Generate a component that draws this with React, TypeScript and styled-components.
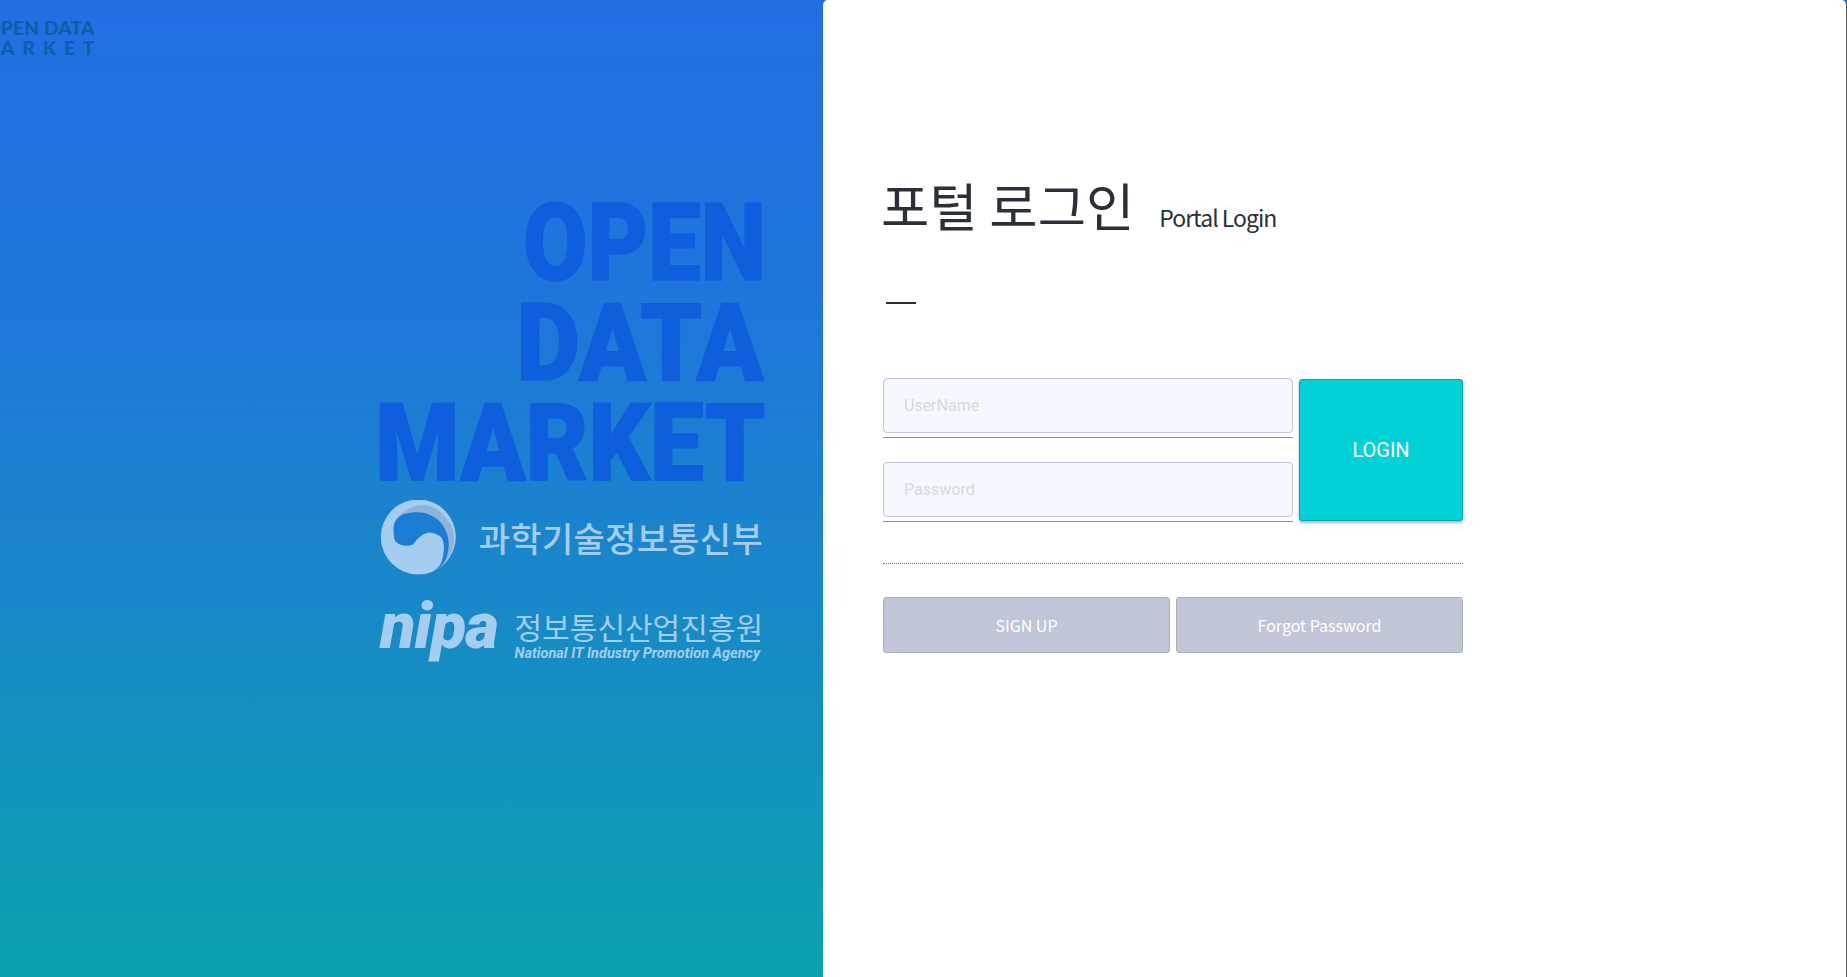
import React from 'react';
import styled, { createGlobalStyle } from 'styled-components';

const KR = `'Noto Sans CJK KR', 'Noto Sans', sans-serif`;

const GlobalStyle = createGlobalStyle`
  html, body {
    margin: 0;
    padding: 0;
    height: 100%;
    overflow: hidden;
    font-family: ${KR};
  }
  * {
    box-sizing: border-box;
  }
`;

const Page = styled.div`
  display: flex;
  width: 1847px;
  height: 977px;
  background: linear-gradient(180deg, #226fe3 0%, #1f75db 30%, #1a84cc 55%, #0aa2ae 100%);
  overflow: hidden;
`;

const Brand = styled.section`
  display: flex;
  flex-direction: column;
  align-items: flex-end;
  width: 823px;
  padding-right: 60px;
  overflow: hidden;
`;

const TopLogo = styled.a`
  align-self: flex-start;
  margin: 18px 0 0 -15px;
  height: 131px;
  font-family: 'Lato', sans-serif;
  font-weight: 900;
  font-size: 19px;
  line-height: 19.5px;
  color: #0d5fa9;
  white-space: nowrap;
`;

const LogoLine = styled.span<{ $wide?: boolean }>`
  display: block;
  margin-left: ${({ $wide }) => ($wide ? '-10px' : '0')};
  letter-spacing: ${({ $wide }) => ($wide ? '8px' : '0.3px')};
`;

const BigTitle = styled.div`
  display: flex;
  flex-direction: column;
  align-items: flex-end;
  margin-top: 44px;
  height: 294px;
`;

const BigLine = styled.span<{ $scale: number; $shift: number }>`
  display: block;
  height: 100px;
  font-family: 'Roboto', sans-serif;
  font-weight: 900;
  font-size: 108px;
  line-height: 100px;
  color: #0f5fdc;
  -webkit-text-stroke: 1.5px #0f5fdc;
  white-space: nowrap;
  transform: translateX(${({ $shift }) => $shift}px) scaleX(${({ $scale }) => $scale});
  transform-origin: right center;
`;

const Ministry = styled.div`
  display: flex;
  align-items: center;
  justify-content: space-between;
  width: 383px;
  margin-top: 13px;
`;

const MinistryName = styled.span`
  font-size: 34px;
  font-weight: 500;
  line-height: 40px;
  letter-spacing: 0.3px;
  color: #a5cdf0;
  white-space: nowrap;
`;

const Nipa = styled.div`
  display: flex;
  align-items: center;
  justify-content: space-between;
  width: 383px;
  margin-top: 18px;
`;

const NipaMark = styled.span`
  font-family: 'Roboto', sans-serif;
  font-weight: 900;
  font-style: italic;
  font-size: 65px;
  line-height: 70px;
  letter-spacing: -1px;
  color: #a5cdf0;
  transform: translateY(-2px);
`;

const NipaText = styled.div`
  display: flex;
  flex-direction: column;
  padding-top: 17px;
  color: #a5cdf0;
`;

const NipaKorean = styled.span`
  font-size: 30px;
  line-height: 32px;
  white-space: nowrap;
`;

const NipaEnglish = styled.span`
  margin-top: 3px;
  font-family: 'Roboto', sans-serif;
  font-weight: 700;
  font-style: italic;
  font-size: 14.5px;
  line-height: 18px;
  white-space: nowrap;
`;

const Panel = styled.main`
  flex: 1;
  padding: 166px 0 0 60px;
  background: #fff;
  border-radius: 5px 5px 0 0;
  border-right: 1px solid #555;
`;

const Heading = styled.div`
  display: flex;
  align-items: baseline;
  gap: 25px;
  margin-left: -2px;
`;

const HeadingKo = styled.h1`
  margin: 0;
  font-size: 52.5px;
  font-weight: 400;
  line-height: 76px;
  color: #2a2f38;
`;

const HeadingEn = styled.span`
  font-size: 23px;
  font-weight: 400;
  letter-spacing: -1px;
  color: #2a2f38;
`;

const Dash = styled.div`
  width: 30px;
  height: 2px;
  margin: 60px 0 74px 3px;
  background: #2a2f38;
`;

const LoginForm = styled.form`
  display: flex;
  flex-direction: column;
  width: 580px;
`;

const LoginRow = styled.div`
  display: grid;
  grid-template-columns: 410px 164px;
  column-gap: 6px;
`;

const Fields = styled.div`
  display: flex;
  flex-direction: column;
  gap: 24px;
`;

const Field = styled.div`
  padding-bottom: 4px;
  border-bottom: 1px solid #8c8c8c;
`;

const Input = styled.input`
  display: block;
  width: 100%;
  height: 55px;
  padding: 0 20px;
  background: #f5f8fe;
  border: 1px solid #c0c6d8;
  border-radius: 4px;
  font-family: 'Roboto', sans-serif;
  font-size: 16px;
  outline: none;

  &::placeholder {
    color: #d3d8e4;
    opacity: 1;
  }
`;

const LoginButton = styled.button`
  margin-top: 1px;
  height: 142px;
  background: #00d2d8;
  border: 1px solid #00a9b0;
  border-radius: 3px;
  box-shadow: 0 2px 3px rgba(0, 0, 0, 0.3);
  font-family: 'Roboto', sans-serif;
  font-size: 20px;
  font-weight: 400;
  color: #fff;
`;

const DottedRule = styled.hr`
  width: 100%;
  margin: 41px 0 33px;
  border: 0;
  border-top: 1px dotted #777;
`;

const SubButtons = styled.div`
  display: grid;
  grid-template-columns: 1fr 1fr;
  column-gap: 6px;
`;

const SubButton = styled.button`
  height: 56px;
  padding-bottom: 2px;
  background: #c0c6d5;
  border: 1px solid #a9aebf;
  border-radius: 3px;
  font-family: ${KR};
  font-size: 16px;
  color: #fff;
`;

const BODY_EDGE =
  'C57 69 60 66 61.7 61.7C63 57 64 52 64 46.7C64 40 61 36 58 35C54 32.5 50 32 48 32.7C44 33 41 36 38 38.3C35 42 33 45 31.7 45C28 46 25 46 21.7 45C17 44 14 40 14 36.7Z';

const TaegeukMark = () => (
  <svg width="77" height="75" viewBox="0 0 77 75">
    <circle cx="38.3" cy="37" r="37.5" fill="#a5cdf0" />
    <path
      d={`M13.5 30C14 24 15 20 17 18C22 11 33 5 43.3 5C50 5 56 8 60 11.7C65 16 69 21 71.7 26.7C78 42 72 62 52 72${BODY_EDGE}`}
      fill="#8fb3d6"
    />
    <path
      d={`M13.5 30C13 20 20 13 33 12.5C41 11.5 47 13 52 16C60 20 63 25 65.5 30C68 35 69 41 68.7 46.7C68 53 67 58 64.5 62C62 66 58 69 52 72${BODY_EDGE}`}
      fill="#1c7dd4"
    />
  </svg>
);

const App: React.FC = () => {
  return (
    <Page>
      <GlobalStyle />
      <Brand>
        <TopLogo>
          <LogoLine>OPEN DATA</LogoLine>
          <LogoLine $wide>MARKET</LogoLine>
        </TopLogo>
        <BigTitle>
          <BigLine $scale={0.865} $shift={3}>OPEN</BigLine>
          <BigLine $scale={0.91} $shift={0}>DATA</BigLine>
          <BigLine $scale={0.89} $shift={2}>MARKET</BigLine>
        </BigTitle>
        <Ministry>
          <TaegeukMark />
          <MinistryName>과학기술정보통신부</MinistryName>
        </Ministry>
        <Nipa>
          <NipaMark>nipa</NipaMark>
          <NipaText>
            <NipaKorean>정보통신산업진흥원</NipaKorean>
            <NipaEnglish>National IT Industry Promotion Agency</NipaEnglish>
          </NipaText>
        </Nipa>
      </Brand>
      <Panel>
        <Heading>
          <HeadingKo>포털 로그인</HeadingKo>
          <HeadingEn>Portal Login</HeadingEn>
        </Heading>
        <Dash />
        <LoginForm>
          <LoginRow>
            <Fields>
              <Field>
                <Input placeholder="UserName" />
              </Field>
              <Field>
                <Input type="password" placeholder="Password" />
              </Field>
            </Fields>
            <LoginButton type="button">LOGIN</LoginButton>
          </LoginRow>
          <DottedRule />
          <SubButtons>
            <SubButton type="button">SIGN UP</SubButton>
            <SubButton type="button">Forgot Password</SubButton>
          </SubButtons>
        </LoginForm>
      </Panel>
    </Page>
  );
};

export default App;
